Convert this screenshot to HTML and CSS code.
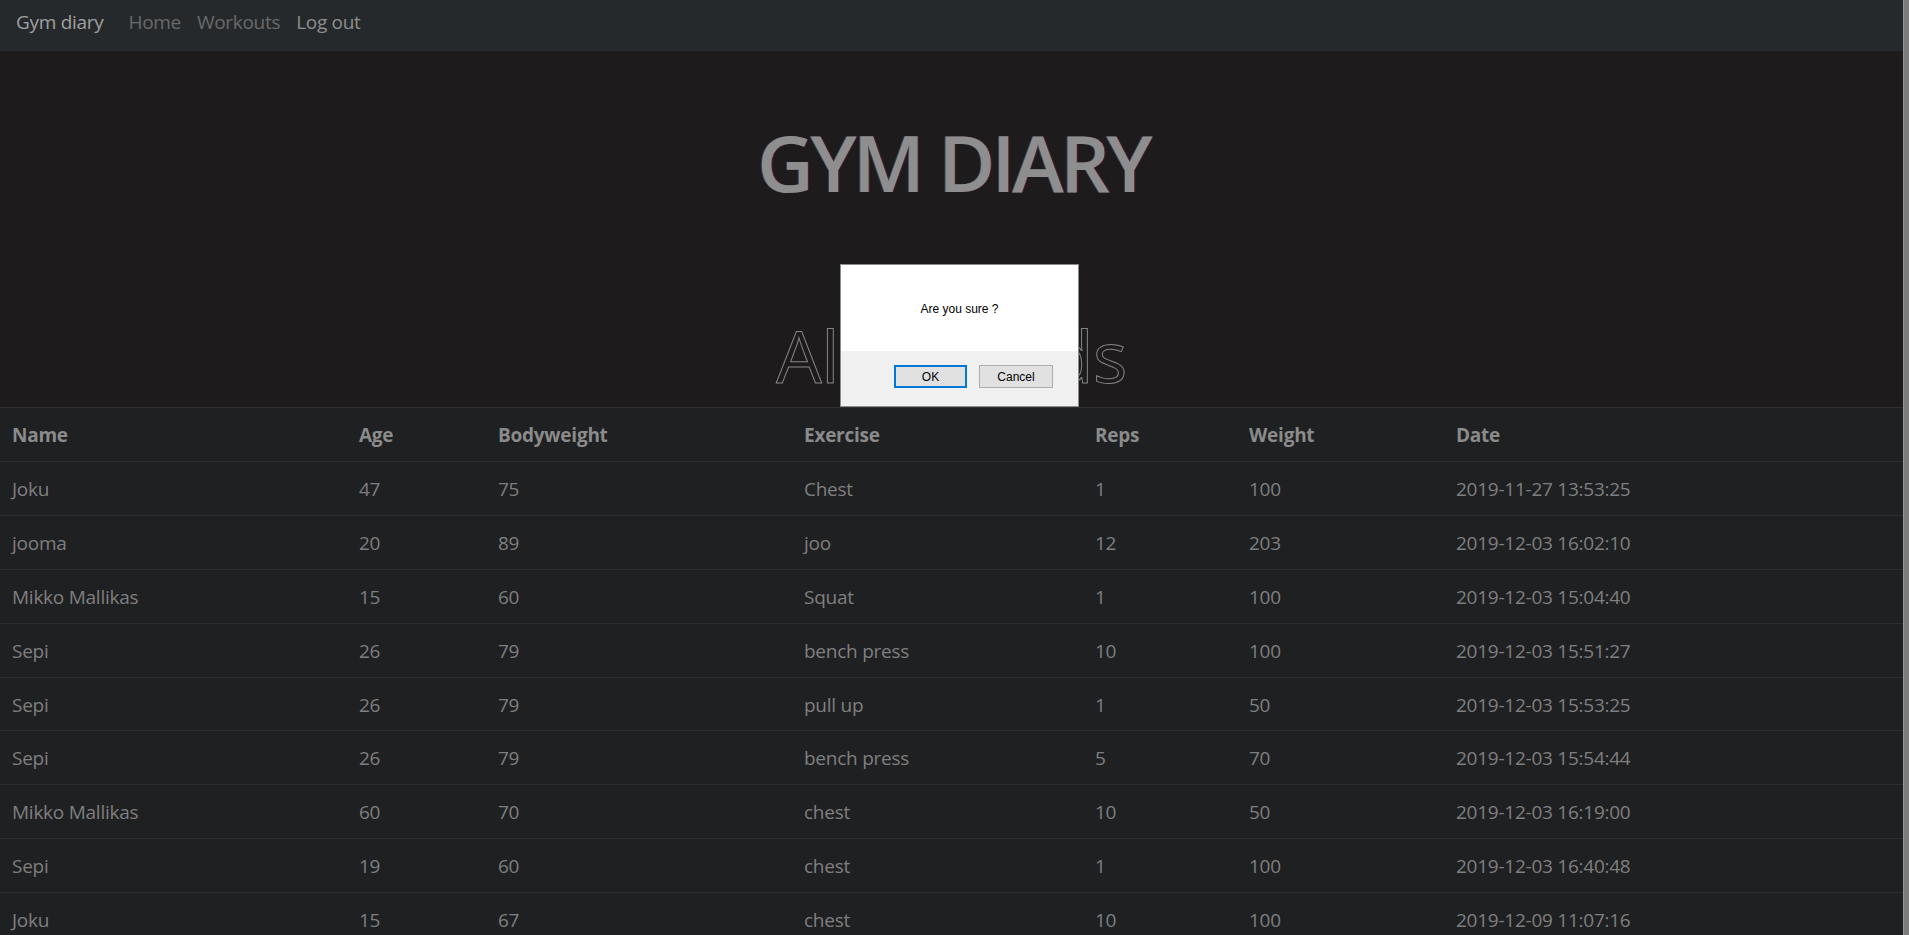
FILE: index.html
```html
<!DOCTYPE html>
<html lang="en">
<head>
<meta charset="utf-8">
<title>Gym diary</title>
<link rel="stylesheet" href="styles.css">
</head>
<body>
<div class="viewport">
  <div class="page">
    <nav class="navbar">
      <a class="brand" href="#">Gym diary</a>
      <a class="nav-link muted" href="#">Home</a>
      <a class="nav-link muted" href="#">Workouts</a>
      <a class="nav-link" href="#">Log out</a>
    </nav>
    <header class="hero">
      <h1 class="title">GYM DIARY</h1>
      <h2 class="subtitle">All records</h2>
    </header>
    <table class="records">
      <colgroup>
        <col class="c-name"><col class="c-age"><col class="c-bw"><col class="c-ex"><col class="c-reps"><col class="c-weight"><col class="c-date">
      </colgroup>
      <thead>
        <tr><th>Name</th><th>Age</th><th>Bodyweight</th><th>Exercise</th><th>Reps</th><th>Weight</th><th>Date</th></tr>
      </thead>
      <tbody>
        <tr><td>Joku</td><td>47</td><td>75</td><td>Chest</td><td>1</td><td>100</td><td>2019-11-27 13:53:25</td></tr>
        <tr><td>jooma</td><td>20</td><td>89</td><td>joo</td><td>12</td><td>203</td><td>2019-12-03 16:02:10</td></tr>
        <tr><td>Mikko Mallikas</td><td>15</td><td>60</td><td>Squat</td><td>1</td><td>100</td><td>2019-12-03 15:04:40</td></tr>
        <tr><td>Sepi</td><td>26</td><td>79</td><td>bench press</td><td>10</td><td>100</td><td>2019-12-03 15:51:27</td></tr>
        <tr><td>Sepi</td><td>26</td><td>79</td><td>pull up</td><td>1</td><td>50</td><td>2019-12-03 15:53:25</td></tr>
        <tr><td>Sepi</td><td>26</td><td>79</td><td>bench press</td><td>5</td><td>70</td><td>2019-12-03 15:54:44</td></tr>
        <tr><td>Mikko Mallikas</td><td>60</td><td>70</td><td>chest</td><td>10</td><td>50</td><td>2019-12-03 16:19:00</td></tr>
        <tr><td>Sepi</td><td>19</td><td>60</td><td>chest</td><td>1</td><td>100</td><td>2019-12-03 16:40:48</td></tr>
        <tr><td>Joku</td><td>15</td><td>67</td><td>chest</td><td>10</td><td>100</td><td>2019-12-09 11:07:16</td></tr>
      </tbody>
    </table>

    <div class="dialog" role="dialog">
      <div class="dialog-body">Are you sure ?</div>
      <div class="dialog-footer">
        <button class="btn btn-primary">OK</button>
        <button class="btn">Cancel</button>
      </div>
    </div>
  </div>
  <div class="scrollbar"></div>
</div>
</body>
</html>
```

FILE: styles.css
```css
* { box-sizing: border-box; }

html, body {
  margin: 0;
  padding: 0;
  height: 935px;
  overflow: hidden;
  background: #1e1b1c;
}

body {
  font-family: "Open Sans", "Noto Sans", sans-serif;
}

.viewport {
  display: flex;
  height: 935px;
}

.page {
  flex: 1;
  position: relative;
  overflow: hidden;
  background: #1e1b1c;
}

.scrollbar {
  width: 6px;
  background: #7b7b7b;
  border-left: 1px solid #939393;
}

/* navbar */
.navbar {
  height: 51px;
  background: #25292c;
  display: flex;
  align-items: flex-start;
  padding: 7px 16px 0;
  line-height: 30px;
  font-size: 19px;
  letter-spacing: -0.3px;
}

.navbar a { text-decoration: none; }

.brand {
  color: #a0a0a0;
  margin-right: 25px;
}

.nav-link {
  color: #8e8e8e;
  margin-right: 16px;
}

.nav-link.muted { color: #6a6a6a; }

/* hero */
.hero {
  height: 356px;
  text-align: center;
  padding-top: 64px;
}

.title {
  margin: 0;
  font-size: 78px;
  line-height: 94px;
  font-weight: 600;
  letter-spacing: -3.5px;
  text-indent: 3.5px;
  color: #8e8e8e;
  text-shadow: -1px 0 rgba(70, 110, 150, 0.55), 1px 0 rgba(130, 40, 50, 0.55);
}

.subtitle {
  margin: 103px 0 0;
  font-size: 72px;
  line-height: 86px;
  font-weight: 400;
  letter-spacing: -0.5px;
  color: transparent;
  -webkit-text-stroke: 1px #858585;
}

/* table */
.records {
  width: 100%;
  table-layout: fixed;
  border-collapse: collapse;
  background: #1f2022;
  font-size: 19px;
  line-height: 28.9px;
  letter-spacing: -0.25px;
}

.c-name { width: 347px; }
.c-age { width: 139px; }
.c-bw { width: 306px; }
.c-ex { width: 291px; }
.c-reps { width: 154px; }
.c-weight { width: 207px; }

.records th,
.records td {
  padding: 13px 12px 11px;
  text-align: left;
  border-top: 1px solid #2c2e31;
  white-space: nowrap;
}

.records th {
  font-weight: 700;
  color: #8b8b8b;
}

.records td {
  color: #7f7f7f;
}

/* confirm dialog */
.dialog {
  position: absolute;
  left: 840px;
  top: 264px;
  width: 239px;
  height: 143px;
  background: #f0f0f0;
  border: 1px solid #8c8c8c;
  font-family: "Liberation Sans", Arial, sans-serif;
  font-size: 12px;
  color: #000;
  display: flex;
  flex-direction: column;
}

.dialog-body {
  height: 86px;
  background: #fff;
  text-align: center;
  padding-top: 37px;
  line-height: 14px;
}

.dialog-footer {
  flex: 1;
  display: flex;
  justify-content: flex-end;
  align-items: flex-start;
  gap: 12px;
  padding: 14px 25px 0 0;
}

.btn {
  width: 74px;
  height: 23px;
  background: #e1e1e1;
  border: 1px solid #adadad;
  font-family: "Liberation Sans", Arial, sans-serif;
  font-size: 12px;
  color: #000;
  padding: 0;
}

.btn-primary {
  width: 73px;
  border: 2px solid #0078d7;
}
```
